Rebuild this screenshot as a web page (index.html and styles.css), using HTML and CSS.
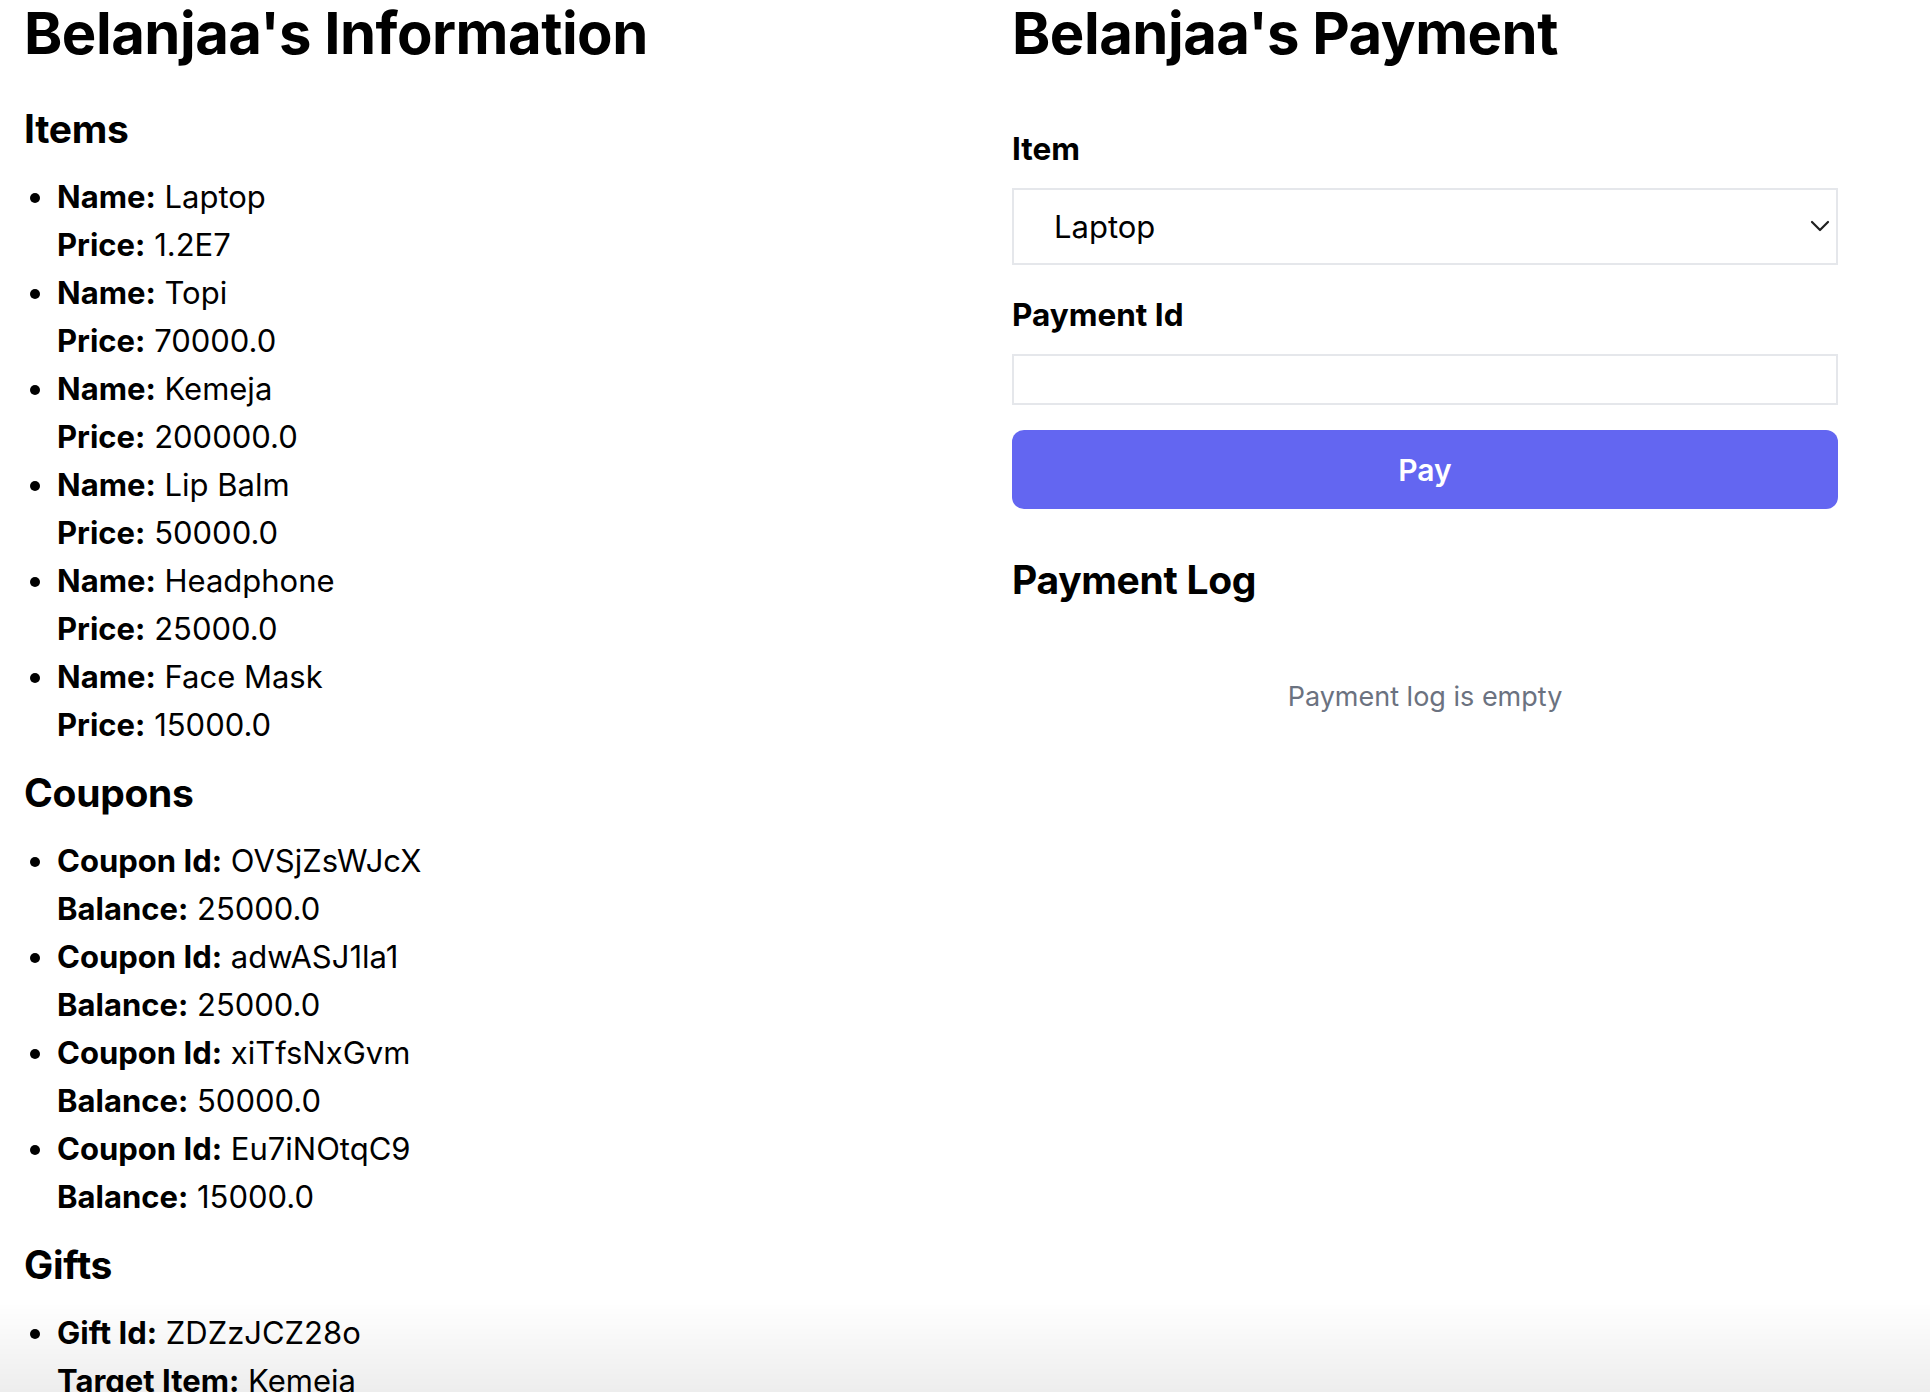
FILE: index.html
```html
<!DOCTYPE html>
<html lang="en">
<head>
<meta charset="utf-8">
<title>Belanjaa</title>
<link rel="stylesheet" href="styles.css">
</head>
<body>
<div class="page">
  <section class="info">
    <h1 class="title">Belanjaa's Information</h1>

    <h2 class="section-title first">Items</h2>
    <ul class="list">
      <li><span class="row"><b>Name:</b> Laptop</span><span class="row"><b>Price:</b> 1.2E7</span></li>
      <li><span class="row"><b>Name:</b> Topi</span><span class="row"><b>Price:</b> 70000.0</span></li>
      <li><span class="row"><b>Name:</b> Kemeja</span><span class="row"><b>Price:</b> 200000.0</span></li>
      <li><span class="row"><b>Name:</b> Lip Balm</span><span class="row"><b>Price:</b> 50000.0</span></li>
      <li><span class="row"><b>Name:</b> Headphone</span><span class="row"><b>Price:</b> 25000.0</span></li>
      <li><span class="row"><b>Name:</b> Face Mask</span><span class="row"><b>Price:</b> 15000.0</span></li>
    </ul>

    <h2 class="section-title">Coupons</h2>
    <ul class="list">
      <li><span class="row"><b>Coupon Id:</b> OVSjZsWJcX</span><span class="row"><b>Balance:</b> 25000.0</span></li>
      <li><span class="row"><b>Coupon Id:</b> adwASJ1la1</span><span class="row"><b>Balance:</b> 25000.0</span></li>
      <li><span class="row"><b>Coupon Id:</b> xiTfsNxGvm</span><span class="row"><b>Balance:</b> 50000.0</span></li>
      <li><span class="row"><b>Coupon Id:</b> Eu7iNOtqC9</span><span class="row"><b>Balance:</b> 15000.0</span></li>
    </ul>

    <h2 class="section-title">Gifts</h2>
    <ul class="list">
      <li><span class="row"><b>Gift Id:</b> ZDZzJCZ28o</span><span class="row"><b>Target Item:</b> Kemeja</span></li>
    </ul>
  </section>

  <section class="payment">
    <h1 class="title">Belanjaa's Payment</h1>

    <form class="form">
      <label class="label first" for="item">Item</label>
      <div class="select-wrap">
        <select id="item" class="select">
          <option>Laptop</option>
          <option>Topi</option>
          <option>Kemeja</option>
          <option>Lip Balm</option>
          <option>Headphone</option>
          <option>Face Mask</option>
        </select>
        <svg class="chevron" width="20" height="12" viewBox="0 0 20 12" aria-hidden="true"><path d="M2 2 L10 10 L18 2" fill="none" stroke="#1f1f1f" stroke-width="2.2" stroke-linecap="round" stroke-linejoin="round"/></svg>
      </div>

      <label class="label" for="pid">Payment Id</label>
      <input id="pid" class="input" type="text">

      <button type="button" class="pay">Pay</button>
    </form>

    <h2 class="section-title log-title">Payment Log</h2>
    <p class="empty">Payment log is empty</p>
  </section>
</div>
<div class="bottom-fade"></div>
</body>
</html>
```
FILE: styles.css
```css
* { box-sizing: border-box; }

html, body {
  margin: 0;
  padding: 0;
  background: #ffffff;
}

body {
  font-family: Inter, "Noto Sans", "Liberation Sans", sans-serif;
  color: #000;
  font-size: 31px;
}

.page {
  display: grid;
  grid-template-columns: 988px 826px;
  padding-left: 24px;
}

.title {
  margin: 0;
  font-size: 58px;
  line-height: 66px;
  font-weight: 700;
  letter-spacing: -0.5px;
}

.section-title {
  margin: 20px 0 0;
  font-size: 39px;
  line-height: 48px;
  font-weight: 700;
  letter-spacing: -0.3px;
}

.section-title.first {
  margin-top: 39px;
}

.list {
  margin: 20px 0 0;
  padding-left: 33px;
  list-style: disc;
}

.list li {
  line-height: 48px;
}

.row {
  display: block;
}

.row b {
  font-weight: 700;
}

.form {
  display: flex;
  flex-direction: column;
}

.label {
  display: block;
  margin-top: 29px;
  font-size: 31.5px;
  line-height: 42px;
  font-weight: 700;
}

.label.first {
  margin-top: 62px;
}

.select-wrap {
  position: relative;
  margin-top: 18px;
}

.select {
  display: block;
  width: 100%;
  height: 77px;
  appearance: none;
  -webkit-appearance: none;
  border: 2px solid #e5e7eb;
  border-radius: 0;
  background: #fff;
  padding: 0 60px 0 40px;
  font-family: inherit;
  font-size: 31px;
  color: #000;
}

.chevron {
  position: absolute;
  right: 8px;
  top: 32px;
  pointer-events: none;
}

.input {
  display: block;
  width: 100%;
  height: 51px;
  margin-top: 18px;
  border: 2px solid #e5e7eb;
  border-radius: 0;
  background: #fff;
  font-family: inherit;
  font-size: 30px;
  padding: 0 12px;
}

.pay {
  display: block;
  width: 100%;
  height: 79px;
  margin-top: 25px;
  border: none;
  border-radius: 12px;
  background: #6366f1;
  color: #fff;
  font-family: inherit;
  font-size: 30px;
  font-weight: 600;
}

.log-title {
  margin-top: 47px;
}

.empty {
  margin: 72px 0 0;
  text-align: center;
  color: #6b7280;
  font-size: 27px;
  line-height: 42px;
}

.bottom-fade {
  position: fixed;
  left: 0;
  right: 0;
  bottom: 0;
  height: 90px;
  background: linear-gradient(to bottom, rgba(0,0,0,0), rgba(0,0,0,0.07));
  pointer-events: none;
}
```
